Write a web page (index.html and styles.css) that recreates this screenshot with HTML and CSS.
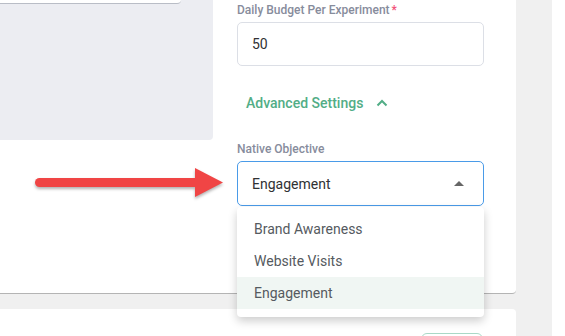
FILE: index.html
```html
<!DOCTYPE html>
<html lang="en">
<head>
    <meta charset="UTF-8">
    <meta name="viewport" content="width=device-width, initial-scale=1.0">
    <title>Experiment Settings</title>
    <link rel="stylesheet" href="styles.css">
</head>
<body>

<div class="page">
    <div class="main">
        <div class="card card-top">
            <!-- left preview panel -->
            <div class="preview-col">
                <div class="preview">
                    <div class="preview-input"></div>
                </div>
            </div>

            <!-- settings form -->
            <div class="form-col">
                <label class="field-label">Daily Budget Per Experiment<span class="req">*</span></label>
                <div class="text-input">50</div>

                <div class="advanced">
                    <span>Advanced Settings</span>
                    <svg class="chevron" width="12" height="8" viewBox="0 0 12 8">
                        <path d="M1.5 6.5 L6 2 L10.5 6.5" fill="none" stroke="#52ad86" stroke-width="2"/>
                    </svg>
                </div>

                <label class="field-label label-native">Native Objective</label>
                <div class="select-wrap">
                    <div class="select-box">
                        <span>Engagement</span>
                        <span class="caret"></span>
                    </div>
                    <ul class="dropdown">
                        <li>Brand Awareness</li>
                        <li>Website Visits</li>
                        <li class="active">Engagement</li>
                    </ul>
                </div>
            </div>

            <!-- annotation arrow -->
            <svg class="arrow" width="200" height="40" viewBox="0 0 200 40">
                <line x1="9.5" y1="17.5" x2="168" y2="17.5" stroke="#f04545" stroke-width="9" stroke-linecap="round"/>
                <polygon points="165,3 193,17.5 165,32" fill="#f04545"/>
            </svg>
        </div>

        <div class="card card-bottom">
            <div class="outline-btn"></div>
        </div>
    </div>
    <div class="side-gap"></div>
    <div class="side-edge"></div>
</div>

</body>
</html>
```

FILE: styles.css
```css
body {
    margin: 0;
    padding: 0;
    height: 336px;
    overflow: hidden;
    background: #f0f0f0;
    font-family: Roboto, "Liberation Sans", Arial, sans-serif;
}

.page {
    display: flex;
    height: 336px;
    overflow: hidden;
}

.main {
    width: 516px;
    display: flex;
    flex-direction: column;
    gap: 15px;
}

.side-gap {
    width: 36px;
    background: #f0f0f0;
}

.side-edge {
    flex: 1;
    background: #ffffff;
}

.card {
    background: #ffffff;
    position: relative;
}

.card-top {
    height: 293px;
    flex-shrink: 0;
    display: flex;
    border-bottom: 1px solid #b4b4b4;
    border-bottom-right-radius: 4px;
}

.card-bottom {
    flex: 1;
    min-height: 0;
    overflow: hidden;
    border-top-right-radius: 4px;
    display: flex;
    justify-content: flex-end;
    align-items: flex-start;
    padding: 24px 33px 0 0;
}

.outline-btn {
    flex-shrink: 0;
    width: 60px;
    height: 30px;
    border: 1px solid #a9d9c7;
    border-radius: 6px;
}

.preview-col {
    width: 213px;
}

.preview {
    height: 140px;
    background: #ecedf2;
    border-bottom-right-radius: 4px;
}

.preview-input {
    width: 181px;
    height: 3px;
    background: #ffffff;
    border-bottom: 1px solid #b9bdc6;
    border-bottom-right-radius: 4px;
}

.form-col {
    width: 247px;
    margin-left: 24px;
    padding-top: 2px;
    display: flex;
    flex-direction: column;
}

.field-label {
    display: block;
    font-size: 12px;
    line-height: 16px;
    font-weight: 500;
    color: #878c9c;
}

.req {
    color: #f2527a;
    margin-left: 2px;
}

.text-input {
    margin-top: 4px;
    height: 42px;
    border: 1px solid #dcdfe6;
    border-radius: 5px;
    padding-left: 14px;
    display: flex;
    align-items: center;
    font-size: 14px;
    color: #303133;
}

.advanced {
    margin-top: 27px;
    padding-left: 9px;
    height: 20px;
    display: flex;
    align-items: center;
    gap: 13px;
    font-size: 14px;
    font-weight: 500;
    color: #52ad86;
}

.chevron {
    margin-top: -1px;
}

.label-native {
    margin-top: 28px;
}

.select-wrap {
    position: relative;
    margin-top: 4px;
}

.select-box {
    height: 43px;
    border: 1px solid #4a9be8;
    border-radius: 5px;
    padding: 0 14px;
    display: flex;
    align-items: center;
    justify-content: space-between;
    font-size: 14px;
    color: #303133;
}

.caret {
    width: 0;
    height: 0;
    border-left: 5px solid transparent;
    border-right: 5px solid transparent;
    border-bottom: 5px solid #666666;
    margin-right: 5px;
}

.dropdown {
    position: absolute;
    top: 46px;
    left: 0;
    width: 247px;
    margin: 0;
    padding: 6px 0 8px;
    list-style: none;
    background: #ffffff;
    border-radius: 4px;
    box-shadow: 0 4px 10px rgba(0, 0, 0, 0.2);
    z-index: 10;
}

.dropdown li {
    height: 32px;
    line-height: 32px;
    padding-left: 17px;
    font-size: 14px;
    color: #555a60;
}

.dropdown li.active {
    background: #f0f6f3;
}

.arrow {
    position: absolute;
    left: 30px;
    top: 165px;
    filter: drop-shadow(0 2px 1.5px rgba(0, 0, 0, 0.3));
}
```
